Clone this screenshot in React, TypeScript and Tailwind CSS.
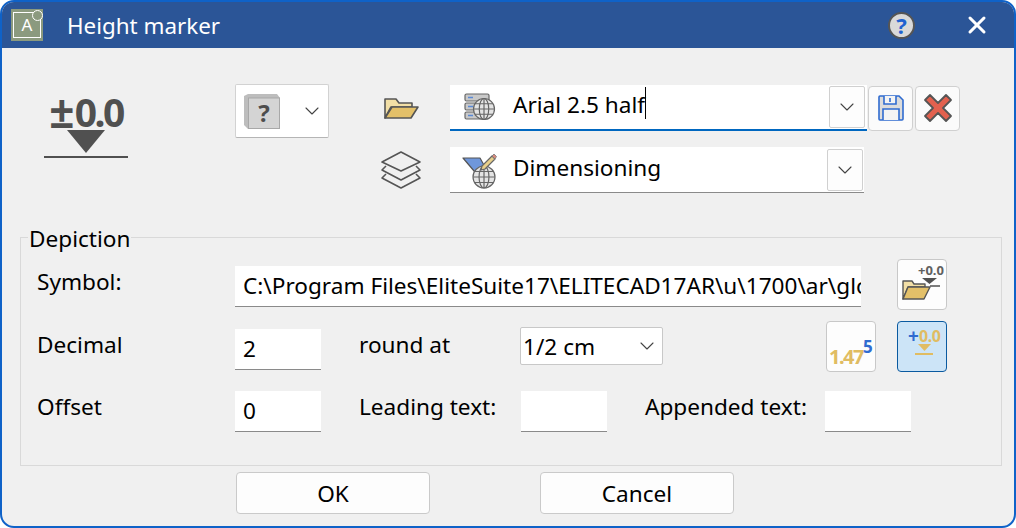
import { ChevronDown, X } from 'lucide-react';
import React from 'react';

function Chevron() {
  return <ChevronDown className="h-[24px] w-[24px] text-[#444]" strokeWidth={1.1} />;
}

function Field({ value = '', className = '' }: { value?: string; className?: string }) {
  return (
    <div className={`flex h-[41px] items-center overflow-hidden whitespace-nowrap border-b border-[#8a8a8a] bg-white pl-[8px] ${className}`}>
      {value}
    </div>
  );
}

function ToolButton({ children, active = false }: { children: React.ReactNode; active?: boolean }) {
  return (
    <div
      className={`h-[51px] w-[50px] overflow-hidden rounded-[4px] border ${
        active ? 'border-[#0a5aa0] bg-[#cce4f7]' : 'border-[#c8c8c8] bg-[#fdfdfd]'
      }`}
    >
      <svg viewBox="1 1 49 49" className="h-[49px] w-[49px] font-['Noto_Sans',sans-serif] font-bold">
        {children}
      </svg>
    </div>
  );
}

function FolderIcon({ className = '' }: { className?: string }) {
  return (
    <svg viewBox="0 0 36 24" className={className}>
      <path d="M2 22V3h11l3 4h13v4H8L2 22z" fill="#f2dfa6" stroke="#555" strokeWidth="1.6" strokeLinejoin="round" />
      <path d="M2 22l7-11h26l-7 11H2z" fill="#e3c069" stroke="#555" strokeWidth="1.6" strokeLinejoin="round" />
    </svg>
  );
}

function Globe({ x, y, r }: { x: number; y: number; r: number }) {
  return (
    <g fill="#e4e4e4" stroke="#666" strokeWidth="1.2">
      <circle cx={x} cy={y} r={r} />
      <ellipse cx={x} cy={y} rx={r * 0.45} ry={r} fill="none" />
      <path d={`M${x - r} ${y}h${r * 2}M${x} ${y - r}v${r * 2}M${x - r * 0.85} ${y - r * 0.5}h${r * 1.7}M${x - r * 0.85} ${y + r * 0.5}h${r * 1.7}`} fill="none" />
    </g>
  );
}

function ServerGlobeIcon() {
  return (
    <svg viewBox="0 0 32 28" className="h-[28px] w-[32px]">
      <g fill="#c9c9c9" stroke="#666" strokeWidth="1.2">
        <rect x="1" y="1" width="24" height="7" rx="1.5" />
        <rect x="1" y="10" width="24" height="7" rx="1.5" />
        <rect x="1" y="19" width="24" height="7" rx="1.5" />
      </g>
      <path d="M4 4.500h5M4 13.500h5M4 22.500h5" stroke="#5b8ad6" strokeWidth="1.6" />
      <Globe x={20} y={16} r={10.5} />
    </svg>
  );
}

function LayerGlobeIcon() {
  return (
    <svg viewBox="0 0 36 38" className="h-[38px] w-[36px]">
      <path d="M1 7h17l5 9-5 11L1 7z" fill="#6f97db" stroke="#555" strokeWidth="1.2" strokeLinejoin="round" />
      <Globe x={22} y={26} r={11} />
      <path d="M20 15l10-10 3 3-10 10-4 1z" fill="#e8cf8a" stroke="#666" strokeWidth="1.2" strokeLinejoin="round" />
      <path d="M30 5l2-2 2.500 2.500-1.500 2.500z" fill="#d98a7c" stroke="#777" strokeWidth="0.8" />
    </svg>
  );
}

function LayersIcon() {
  return (
    <svg viewBox="0 0 42 38" fill="none" stroke="#555" strokeWidth="1.6" strokeLinejoin="round" className="h-[38px] w-[42px]">
      <path d="M21 1L40 11 21 20 2 11z" />
      <path d="M6 15l-4 4 19 10 19-10-4-4" />
      <path d="M6 23l-4 4 19 10 19-10-4-4" />
    </svg>
  );
}

function SaveIcon() {
  return (
    <svg viewBox="0 0 28 28" className="h-[28px] w-[28px]">
      <path d="M2 3a1 1 0 011-1h19l4 4v19a1 1 0 01-1 1H3a1 1 0 01-1-1z" fill="#dcdcdc" stroke="#2f6bd0" strokeWidth="1.6" />
      <path d="M7 2v8h12V2M13 4v4M6 26V15h16v11" fill="#f4f4f4" stroke="#2f6bd0" strokeWidth="1.6" />
    </svg>
  );
}

function DeleteIcon() {
  return (
    <svg viewBox="0 0 30 30" className="h-[30px] w-[30px]">
      <path d="M7 2l8 8 8-8 5 5-8 8 8 8-5 5-8-8-8 8-5-5 8-8-8-8z" fill="#e2614f" stroke="#555" strokeWidth="1.8" strokeLinejoin="round" />
    </svg>
  );
}

function BoxIcon() {
  return (
    <svg viewBox="0 0 36 36" className="h-[36px] w-[36px] font-['Noto_Sans',sans-serif] font-bold">
      <path d="M4 1h29l3 4v31H4L0 32V3z" fill="#bdbdbd" />
      <rect x="4.500" y="5" width="31" height="30.500" fill="#d4d4d4" stroke="#a8a8a8" />
      <text x="20" y="29" textAnchor="middle" fontSize="24" fill="#4d4d4d">?</text>
    </svg>
  );
}

function HeightMarkerPreview() {
  return (
    <div className="flex w-[84px] flex-col items-center">
      <div className="flex h-[32px] items-center text-[39px] font-bold leading-none tracking-[-2.5px] text-[#505050]">
        <span className="mr-[3px] text-[44px]">±</span>0.0
      </div>
      <div className="mt-[3px] h-0 w-0 border-x-[19px] border-t-[23px] border-x-transparent border-t-[#505050]" />
      <div className="mt-[3px] h-[2px] w-[84px] bg-[#505050]" />
    </div>
  );
}

export default function App(): React.ReactElement {
  return (
    <div className="flex h-[528px] w-[1016px] flex-col overflow-hidden rounded-[14px] border-2 border-[#0f62c8] bg-[#f0f0f0] font-['Noto_Sans',sans-serif] text-[22.6px] leading-none text-black">
      {/* Title bar */}
      <div className="flex h-[46px] flex-none items-center bg-[#2b5597] pl-[9px] pr-[23px] text-white">
        <div className="relative flex h-[32px] w-[32px] items-center justify-center bg-[#8b9a7f]">
          <div className="mb-[1px] flex h-[26px] w-[28px] items-center justify-center border border-white text-[17px]">A</div>
          <div className="absolute right-0 top-[1px] h-[11px] w-[11px] rounded-full border border-white bg-[#8b9a7f]" />
        </div>
        <span className="ml-[24px] pt-[2px] text-[22.4px]">Height marker</span>
        <div className="ml-auto mr-[48px] flex h-[27px] w-[27px] items-center justify-center rounded-full border-2 border-[#555] bg-[#d9d9d9] text-[22px] font-bold text-[#1f62d0]">?</div>
        <X className="h-[28px] w-[28px] text-white" strokeWidth={2.6} />
      </div>

      {/* Top section */}
      <div className="flex h-[177px] flex-none pl-[42px] pt-[36px]">
        <div className="w-[191px] pt-[11px]">
          <HeightMarkerPreview />
        </div>
        <div className="flex h-[54px] w-[94px] items-center justify-between rounded-[2px] border border-[#d2d2d2] border-b-[#b5b5b5] bg-white pl-[8px] pr-[4px]">
          <BoxIcon />
          <Chevron />
        </div>
        <div className="ml-[55px] mt-[1px] flex flex-col items-start">
          <div className="flex h-[46px] items-center">
            <FolderIcon className="ml-[-1px] h-[24px] w-[36px]" />
            <div className="ml-[31px] flex h-[46px] w-[417px] items-center border-b-2 border-[#0067c0] bg-white pl-[14px] pr-[2px]">
              <ServerGlobeIcon />
              <span className="mb-[3px] ml-[17px]">Arial 2.5 half</span>
              <span className="mb-[8px] h-[32px] w-px bg-black" />
              <div className="ml-auto flex h-[42px] w-[36px] items-center justify-center rounded-[2px] border border-[#d0d0d0] bg-[#fdfdfd]">
                <Chevron />
              </div>
            </div>
            <div className="ml-[1px] flex h-[45px] w-[45px] items-center justify-center rounded-[4px] border border-[#d0d0d0] bg-[#fbfbfb]">
              <SaveIcon />
            </div>
            <div className="ml-[2px] flex h-[45px] w-[45px] items-center justify-center rounded-[4px] border border-[#d0d0d0] bg-[#fbfbfb]">
              <DeleteIcon />
            </div>
          </div>
          <div className="mt-[16px] flex h-[46px] items-center">
            <div className="ml-[-4px]">
              <LayersIcon />
            </div>
            <div className="ml-[28px] flex h-[46px] w-[414px] items-center border-b border-[#8a8a8a] bg-white pl-[12px] pr-[1px]">
              <LayerGlobeIcon />
              <span className="mb-[2px] ml-[15px]">Dimensioning</span>
              <div className="ml-auto flex h-[42px] w-[36px] items-center justify-center rounded-[2px] border border-[#d0d0d0] bg-[#fdfdfd]">
                <Chevron />
              </div>
            </div>
          </div>
        </div>
      </div>

      {/* Depiction group */}
      <fieldset className="ml-[18px] mr-[12px] h-[241px] flex-none border border-[#d9d9d9]">
        <legend className="ml-[7px] px-[1px] leading-[24px]">
          <span className="inline-block translate-y-[2px]">Depiction</span>
        </legend>
        <div className="pl-[16px] pt-[10px]">
          <div className="flex h-[52px] items-start">
            <span className="w-[198px] pt-[12px]">Symbol:</span>
            <Field className="mt-[7px] w-[626px]" value="C:\Program Files\EliteSuite17\ELITECAD17AR\u\1700\ar\glo" />
            <div className="ml-[36px]">
              <ToolButton>
                <text x="21" y="16" fontSize="13" fill="#606060">+0.0</text>
                <path d="M25 19h15l-7.500 6z" fill="#505050" />
                <path d="M33 27h10" stroke="#505050" strokeWidth="1.500" />
                <path d="M6 40V22h9l2 3h11v3H11l-5 12z" fill="#f2dfa6" stroke="#555" strokeWidth="1.4" strokeLinejoin="round" />
                <path d="M6 40l5-12h22l-6 12z" fill="#e3c069" stroke="#555" strokeWidth="1.4" strokeLinejoin="round" />
              </ToolButton>
            </div>
          </div>
          <div className="mt-[10px] flex h-[52px] items-start">
            <span className="w-[198px] pt-[13px]">Decimal</span>
            <Field className="mt-[8px] w-[86px]" value="2" />
            <span className="ml-[38px] w-[161px] pt-[13px]">round at</span>
            <div className="mt-[6px] flex h-[38px] w-[143px] items-center justify-between rounded-[2px] border border-[#c8c8c8] bg-white pl-[2px] pr-[3px]">
              <span className="pt-[2px]">1/2 cm</span>
              <Chevron />
            </div>
            <div className="ml-[163px]">
              <ToolButton>
                <text x="3" y="43" fontSize="20" letterSpacing="-1.500" fill="#e0bc62">1.47</text>
                <text x="37" y="32" fontSize="17" fill="#2f6bd0">5</text>
              </ToolButton>
            </div>
            <div className="ml-[21px]">
              <ToolButton active>
                <text x="11" y="22" fontSize="19" fill="#2f6bd0">+</text>
                <text x="22" y="21" fontSize="16" letterSpacing="-0.5" fill="#e0bc62">0.0</text>
                <path d="M21 23h13l-6.500 7z" fill="#e0bc62" />
                <path d="M18 33h18" stroke="#e0bc62" strokeWidth="2" />
              </ToolButton>
            </div>
          </div>
          <div className="mt-[10px] flex h-[52px] items-start">
            <span className="w-[198px] pt-[13px]">Offset</span>
            <Field className="mt-[8px] w-[86px]" value="0" />
            <span className="ml-[38px] w-[162px] pt-[13px]">Leading text:</span>
            <Field className="mt-[8px] w-[86px]" />
            <span className="ml-[38px] w-[180px] pt-[13px]">Appended text:</span>
            <Field className="mt-[8px] w-[86px]" />
          </div>
        </div>
      </fieldset>

      {/* Footer */}
      <div className="flex flex-none pl-[234px] pt-[6px]">
        <div className="flex h-[42px] w-[194px] items-center justify-center rounded-[4px] border border-[#cacaca] bg-[#fdfdfd] pt-[3px]">OK</div>
        <div className="ml-[110px] flex h-[42px] w-[194px] items-center justify-center rounded-[4px] border border-[#cacaca] bg-[#fdfdfd] pt-[3px]">Cancel</div>
      </div>
    </div>
  );
}
